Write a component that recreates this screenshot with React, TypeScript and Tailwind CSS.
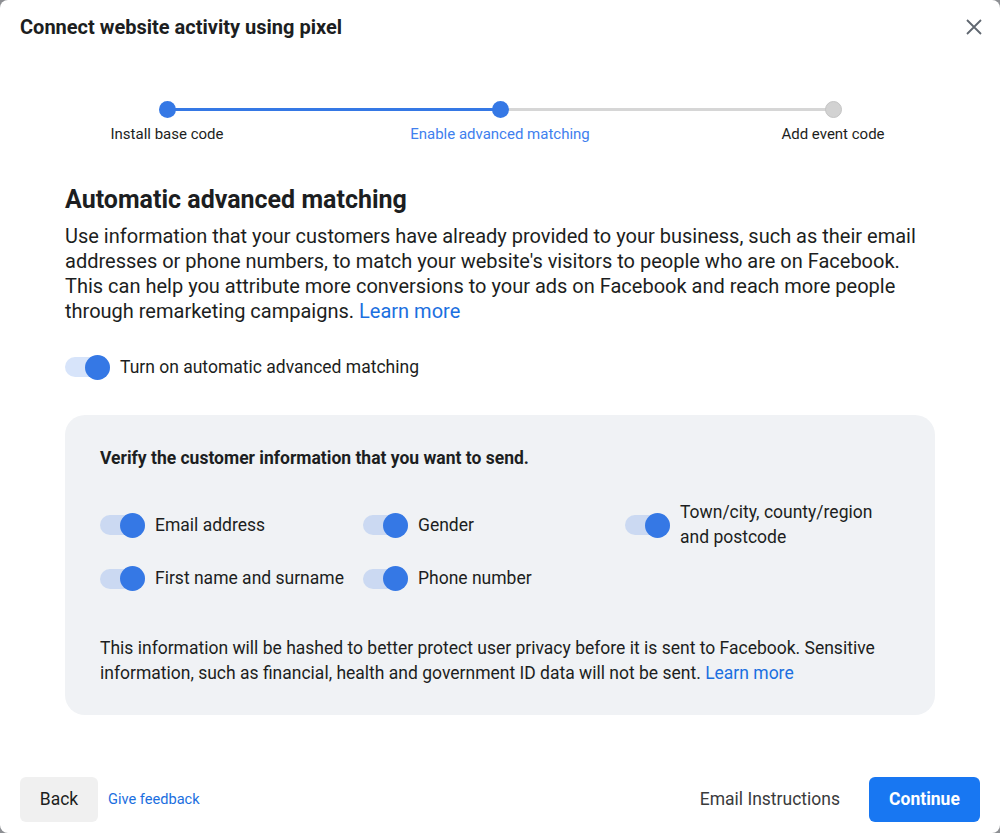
import React from 'react'

const Toggle = () => (
  <span className="relative inline-flex h-[25px] w-[45px] shrink-0 items-center">
    <span className="h-5 w-[45px] rounded-full bg-[#3578e5]/20" />
    <span className="absolute right-0 top-0 h-[25px] w-[25px] rounded-full bg-[#3578e5]" />
  </span>
)

const Step = ({ label, state }: { label: string; state: 'done' | 'active' | 'todo' }) => (
  <div className="flex w-[200px] flex-col items-center">
    <span
      className={
        state === 'todo'
          ? 'h-[17px] w-[17px] rounded-full border border-[#c4c4c4] bg-[#d2d2d2]'
          : 'h-[17px] w-[17px] rounded-full bg-[#3578e5]'
      }
    />
    <span
      className={
        state === 'active'
          ? 'mt-[6px] text-[15px] leading-[20px] text-[#4080ee]'
          : 'mt-[6px] text-[15px] leading-[20px] text-[#1c1e21]'
      }
    >
      {label}
    </span>
  </div>
)

const fields = [
  { label: 'Email address' },
  { label: 'Gender' },
  { label: 'Town/city, county/region and postcode' },
  { label: 'First name and surname' },
  { label: 'Phone number' },
]

export default function App() {
  return (
    <div className="h-[833px] w-[1000px] bg-[#8d8f93] font-['Roboto',sans-serif] text-[#1c1e21]">
      <div className="flex h-full flex-col rounded-lg bg-white">
        {/* header */}
        <div className="flex items-center justify-between pl-5 pr-4 pt-[14px]">
          <h1 className="text-[20px] font-bold leading-[26px]">Connect website activity using pixel</h1>
          <button className="text-[#606770]">
            <svg width="20" height="20" viewBox="0 0 20 20" fill="none" stroke="currentColor" strokeWidth="1.8">
              <path d="M3 3l14 14M17 3L3 17" />
            </svg>
          </button>
        </div>

        {/* stepper */}
        <div className="relative mx-auto mt-[61px] flex w-[866px] justify-between">
          <div className="absolute left-[100px] top-[7px] h-[3px] w-[334px] bg-[#3578e5]" />
          <div className="absolute left-[434px] top-[7px] h-[3px] w-[333px] bg-[#d6d6d6]" />
          <div className="relative flex w-full justify-between">
            <Step label="Install base code" state="done" />
            <Step label="Enable advanced matching" state="active" />
            <Step label="Add event code" state="todo" />
          </div>
        </div>

        {/* body */}
        <div className="mx-[65px] mt-[41px] flex-1">
          <h2 className="text-[25px] font-bold leading-[30px]">Automatic advanced matching</h2>
          <p className="mt-[9px] text-[20px] leading-[25px]">
            Use information that your customers have already provided to your business, such as their email addresses
            or phone numbers, to match your website&apos;s visitors to people who are on Facebook. This can help you
            attribute more conversions to your ads on Facebook and reach more people through remarketing campaigns.{' '}
            <span className="text-[#1b6fe0]">Learn more</span>
          </p>

          <div className="mt-[30px] flex items-center gap-[10px]">
            <Toggle />
            <span className="text-[17.5px]">Turn on automatic advanced matching</span>
          </div>

          <div className="mt-[35px] rounded-[20px] bg-[#f0f2f5] px-[35px] pb-[29px] pt-[32px]">
            <p className="text-[17.5px] font-bold leading-[22px]">Verify the customer information that you want to send.</p>
            <div className="mt-[31px] grid grid-cols-[263px_262px_1fr] gap-y-[16px]">
              {fields.map((f) => (
                <div key={f.label} className="flex items-center gap-[10px]">
                  <Toggle />
                  <span className="w-[210px] text-[17.5px] leading-[25px]">{f.label}</span>
                </div>
              ))}
            </div>
            <p className="mt-[45px] text-[17.5px] leading-[25px]">
              This information will be hashed to better protect user privacy before it is sent to Facebook. Sensitive
              information, such as financial, health and government ID data will not be sent.{' '}
              <span className="text-[#1b6fe0]">Learn more</span>
            </p>
          </div>
        </div>

        {/* footer */}
        <div className="flex items-center justify-between px-5 pb-[11px]">
          <div className="flex items-center gap-[10px]">
            <button className="h-[45px] w-[78px] rounded-md bg-[#f0f0f0] text-[17.5px]">Back</button>
            <span className="text-[14.6px] text-[#1b6fe0]">Give feedback</span>
          </div>
          <div className="flex items-center gap-[29px]">
            <span className="text-[17.5px] text-[#3a3b3c]">Email Instructions</span>
            <button className="h-[45px] w-[111px] rounded-md bg-[#1877f2] text-[17.5px] font-bold text-white">
              Continue
            </button>
          </div>
        </div>
      </div>
    </div>
  )
}
